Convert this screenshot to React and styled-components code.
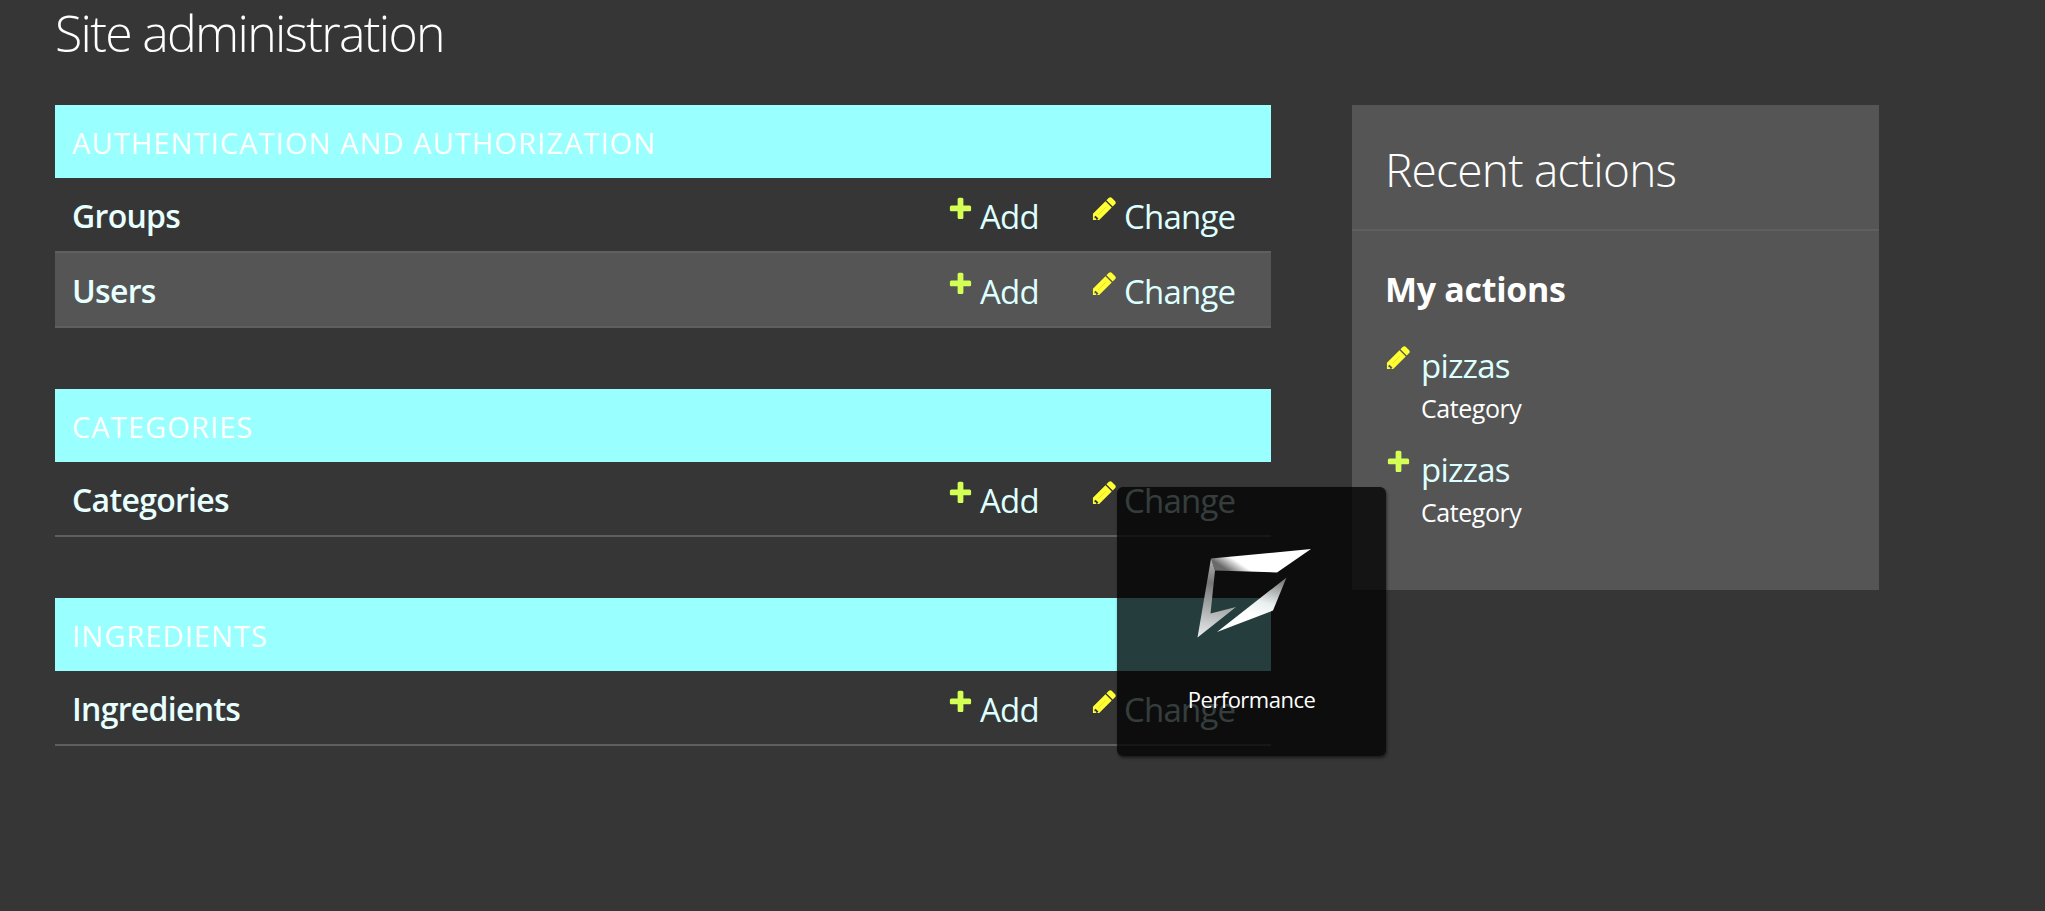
import React from 'react'
import styled, { createGlobalStyle } from 'styled-components'

const GlobalStyle = createGlobalStyle`
    html, body {
        margin: 0;
        padding: 0;
        background-color: #363636;
        font-family: "Open Sans", "Noto Sans", "Liberation Sans", sans-serif;
        color: #ffffff;
    }
    body {
        min-height: 911px;
        overflow: hidden;
    }
`
const Page = styled.div`
    position: relative;
    height: 911px;
    padding-left: 55px;
    box-sizing: border-box;
`
const Title = styled.h1`
    margin: 0;
    height: 105px;
    padding-top: 2px;
    box-sizing: border-box;
    font-size: 50px;
    line-height: 62px;
    font-weight: 300;
    letter-spacing: -1.7px;
`
const Columns = styled.div`
    display: flex;
    align-items: flex-start;
    gap: 81px;
`
const Main = styled.div`
    width: 1216px;
    display: flex;
    flex-direction: column;
    gap: 61px;
`
const Band = styled.div`
    height: 73px;
    background-color: #99ffff;
    padding-left: 17px;
    padding-top: 1px;
    box-sizing: border-box;
    display: flex;
    align-items: center;
    font-size: 29px;
    font-weight: 400;
    letter-spacing: 1.1px;
    color: #ffffff;
    text-transform: uppercase;
`
const Row = styled.div`
    height: 75px;
    box-sizing: border-box;
    display: flex;
    align-items: center;
    padding-left: 17px;
    padding-top: 3px;
    background-color: ${p => (p.$alt ? '#555555' : 'transparent')};
    border-bottom: 2px solid #5f5f5f;
`
const RowName = styled.a`
    flex: 1;
    margin-top: -2px;
    font-size: 32px;
    font-weight: 600;
    letter-spacing: -0.7px;
    color: #e8ffff;
`
const ActionLink = styled.a`
    width: ${p => p.$width}px;
    margin-top: 2px;
    display: flex;
    align-items: flex-start;
    gap: 6px;
    font-size: 33px;
    line-height: 44px;
    letter-spacing: -0.8px;
    color: #ddffff;
`
const IconBox = styled.svg`
    width: 27px;
    height: 27px;
    flex-shrink: 0;
    margin-top: ${p => p.$top || 0}px;
`
const Sidebar = styled.div`
    width: 527px;
    height: 485px;
    background-color: #555555;
`
const SideHead = styled.h2`
    margin: 0;
    height: 126px;
    box-sizing: border-box;
    padding: 35px 0 0 33px;
    border-bottom: 2px solid #5f5f5f;
    font-size: 46px;
    line-height: 58px;
    font-weight: 300;
    letter-spacing: -0.75px;
`
const SideBody = styled.div`
    padding: 36px 33px 0;
`
const SideSub = styled.h3`
    margin: 0 0 33px;
    font-size: 34px;
    line-height: 44px;
    font-weight: 700;
    letter-spacing: -0.3px;
`
const ActionItem = styled.div`
    display: flex;
    gap: 9px;
    margin-bottom: 19px;
`
const ActionText = styled.div`
    display: flex;
    flex-direction: column;
`
const ActionName = styled.a`
    font-size: 33px;
    line-height: 44px;
    letter-spacing: -0.8px;
    color: #ddffff;
`
const ActionKind = styled.span`
    font-size: 25px;
    line-height: 41px;
    letter-spacing: -0.45px;
    color: #ffffff;
`
const Popup = styled.div`
    position: absolute;
    left: 1117px;
    top: 487px;
    width: 269px;
    height: 269px;
    border-radius: 6px;
    background-color: rgba(0, 0, 0, 0.76);
    box-shadow: 1px 2px 3px rgba(0, 0, 0, 0.5);
    display: flex;
    flex-direction: column;
    align-items: center;
`
const PopupLogo = styled.svg`
    width: 170px;
    height: 120px;
    margin: 43px 0 0 8px;
`
const PopupLabel = styled.span`
    margin-top: 34px;
    font-size: 22px;
    line-height: 30px;
    letter-spacing: -0.5px;
    color: #ffffff;
`

function AddIcon({ top }) {
    return (
        <IconBox $top={top} viewBox="0 0 1792 1792">
            <path fill="#d4ff55" d="M1600 796v192q0 40-28 68t-68 28h-416v416q0 40-28 68t-68 28h-192q-40 0-68-28t-28-68v-416h-416q-40 0-68-28t-28-68v-192q0-40 28-68t68-28h416v-416q0-40 28-68t68-28h192q40 0 68 28t28 68v416h416q40 0 68 28t28 68z" />
        </IconBox>
    )
}

function ChangeIcon({ top }) {
    return (
        <IconBox $top={top} viewBox="0 0 1792 1792">
            <path fill="#ffff33" fillRule="evenodd" d="M960 416l416 416-832 832h-416v-416zM300 1370l-72 72v94h100v100h94l72-72z" />
            <path fill="#ffff33" d="M1643 512q0 53-37 90l-166 166-416-416 166-165q36-38 90-38 53 0 91 38l235 234q37 39 37 91z" />
            <path stroke="#d8d82a" strokeWidth="50" d="M480 1310l500-500" />
        </IconBox>
    )
}

const modules = [
    { title: 'Authentication and Authorization', rows: ['Groups', 'Users'] },
    { title: 'Categories', rows: ['Categories'] },
    { title: 'Ingredients', rows: ['Ingredients'] },
]

const actions = [
    { name: 'pizzas', kind: 'Category', icon: ChangeIcon },
    { name: 'pizzas', kind: 'Category', icon: AddIcon },
]

function App() {
    return (
        <Page>
            <GlobalStyle />
            <Title>Site administration</Title>
            <Columns>
                <Main>
                    {modules.map(module => (
                        <section key={module.title}>
                            <Band>{module.title}</Band>
                            {module.rows.map((name, index) => (
                                <Row key={name} $alt={index === 1}>
                                    <RowName>{name}</RowName>
                                    <ActionLink $width={144}>
                                        <AddIcon top={0} />
                                        Add
                                    </ActionLink>
                                    <ActionLink $width={180}>
                                        <ChangeIcon top={0} />
                                        Change
                                    </ActionLink>
                                </Row>
                            ))}
                        </section>
                    ))}
                </Main>
                <Sidebar>
                    <SideHead>Recent actions</SideHead>
                    <SideBody>
                        <SideSub>My actions</SideSub>
                        {actions.map((action, index) => (
                            <ActionItem key={index}>
                                <action.icon top={0} />
                                <ActionText>
                                    <ActionName>{action.name}</ActionName>
                                    <ActionKind>{action.kind}</ActionKind>
                                </ActionText>
                            </ActionItem>
                        ))}
                    </SideBody>
                </Sidebar>
            </Columns>
            <Popup>
                <PopupLogo viewBox="0 0 170 120">
                    <defs>
                        <linearGradient id="shardBand" gradientUnits="userSpaceOnUse" x1="62" y1="44" x2="74" y2="26">
                            <stop offset="0" stopColor="#6a6a6a" />
                            <stop offset="0.6" stopColor="#ffffff" />
                        </linearGradient>
                        <linearGradient id="shardLeg" gradientUnits="userSpaceOnUse" x1="40" y1="30" x2="30" y2="105">
                            <stop offset="0" stopColor="#b0b0b0" />
                            <stop offset="0.3" stopColor="#777777" />
                            <stop offset="1" stopColor="#e4e8e8" />
                        </linearGradient>
                        <linearGradient id="shardLow" gradientUnits="userSpaceOnUse" x1="100" y1="90" x2="112" y2="48">
                            <stop offset="0" stopColor="#ffffff" />
                            <stop offset="0.35" stopColor="#e8eeee" />
                            <stop offset="1" stopColor="#6e6e6e" />
                        </linearGradient>
                    </defs>
                    <polygon fill="url(#shardBand)" points="40,28.5 140,19 106,42.5 44,40.5" />
                    <polygon fill="url(#shardLeg)" points="40,28.5 44,40.5 39.5,83.5 65,77 26.5,107.5" />
                    <polygon fill="url(#shardLow)" points="115.5,47.5 102,80.5 46,102" />
                </PopupLogo>
                <PopupLabel>Performance</PopupLabel>
            </Popup>
        </Page>
    )
}

export default App
